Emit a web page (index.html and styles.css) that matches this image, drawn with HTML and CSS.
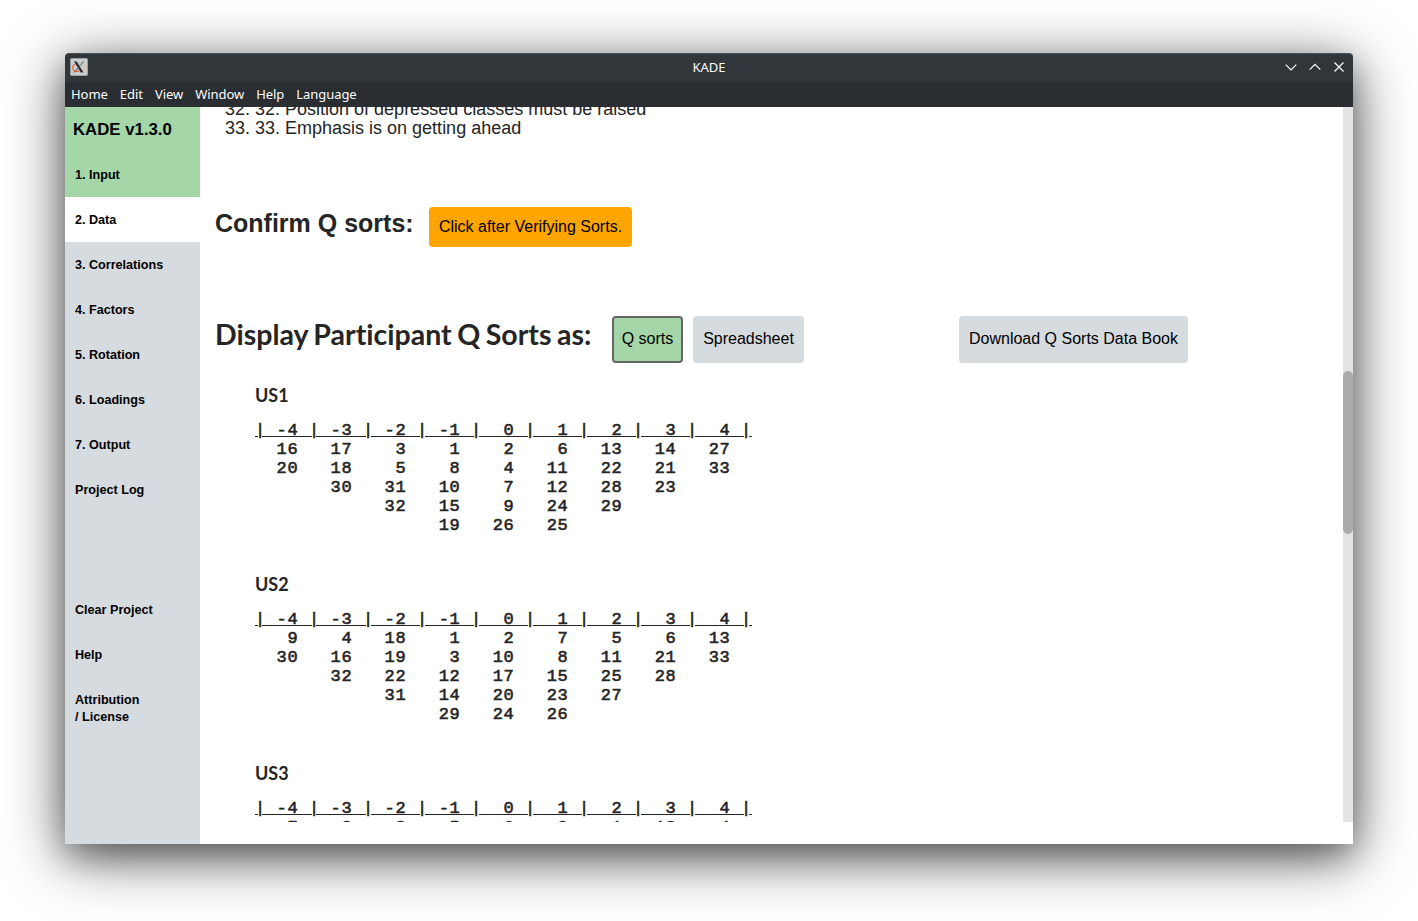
FILE: index.html
```html
<!DOCTYPE html>
<html lang="en">
<head>
<meta charset="utf-8">
<title>KADE</title>
<link rel="stylesheet" href="styles.css">
</head>
<body>
<div class="window">
  <header class="titlebar">
    <svg class="app-icon" width="18" height="18" viewBox="0 0 18 18"><rect x=".5" y=".5" width="17" height="17" rx="1" fill="#c9cdd0" stroke="#9ca1a4"/><path d="M5.500 6C3 7 2 9 3 11c.8 2 3 2.800 6 2.300" fill="none" stroke="#ee6b3b" stroke-width="1.300"/><path d="M11.500 5c3 .5 4.500 3 3.500 5.500-.7 2-2.500 3-4.500 3" fill="none" stroke="#e5bd86" stroke-width="1"/><path d="M4 3.500h2.800l6.700 11h-2.800z" fill="#2b3035"/><path d="M13.500 3.500L4.300 14.500" stroke="#4b5055" stroke-width=".9"/></svg>
    <h1 class="title">KADE</h1>
    <div class="controls">
      <svg width="12" height="12" viewBox="0 0 12 12"><path d="M.7 3.700L6 9l5.300-5.300"/></svg>
      <svg width="12" height="12" viewBox="0 0 12 12"><path d="M.7 8.700L6 3.400l5.300 5.300"/></svg>
      <svg width="12" height="12" viewBox="0 0 12 12"><path d="M1.500 1.500l9 9m0-9l-9 9"/></svg>
    </div>
  </header>
  <nav class="menubar"><span>Home</span><span>Edit</span><span>View</span><span>Window</span><span>Help</span><span>Language</span></nav>
  <div class="body">
    <aside class="sidebar">
      <div class="brand">KADE v1.3.0</div>
      <a class="item done">1. Input</a>
      <a class="item active">2. Data</a>
      <a class="item">3. Correlations</a>
      <a class="item">4. Factors</a>
      <a class="item">5. Rotation</a>
      <a class="item">6. Loadings</a>
      <a class="item">7. Output</a>
      <a class="item">Project Log</a>
      <a class="item gap">Clear Project</a>
      <a class="item">Help</a>
      <a class="item two">Attribution<br>/ License</a>
    </aside>
    <main class="content">
      <div class="statements"><div>32. 32. Position of depressed classes must be raised</div><div>33. 33. Emphasis is on getting ahead</div></div>
      <div class="confirm"><h2>Confirm Q sorts:</h2><button class="btn orange">Click after Verifying Sorts.</button></div>
      <div class="display"><h2>Display Participant Q Sorts as:</h2><button class="btn selected">Q sorts</button><button class="btn sheet">Spreadsheet</button><button class="btn download">Download Q Sorts Data Book</button></div>
      <section class="sort"><h3>US1</h3>
<pre><u>| -4 | -3 | -2 | -1 |  0 |  1 |  2 |  3 |  4 |</u>
  16   17    3    1    2    6   13   14   27
  20   18    5    8    4   11   22   21   33
       30   31   10    7   12   28   23
            32   15    9   24   29
                 19   26   25</pre></section>
      <section class="sort"><h3>US2</h3>
<pre><u>| -4 | -3 | -2 | -1 |  0 |  1 |  2 |  3 |  4 |</u>
   9    4   18    1    2    7    5    6   13
  30   16   19    3   10    8   11   21   33
       32   22   12   17   15   25   28
            31   14   20   23   27
                 29   24   26</pre></section>
      <section class="sort"><h3>US3</h3>
<pre><u>| -4 | -3 | -2 | -1 |  0 |  1 |  2 |  3 |  4 |</u>
   7    3    8    5    6    9    1   12    4</pre></section>
    </main>
    <div class="scrollbar"><div class="thumb"></div></div>
  </div>
</div>
</body>
</html>
```
FILE: styles.css
```css
* { box-sizing: border-box; }
body { margin: 0; padding: 53px 65px 77px; height: 921px; overflow: hidden; background: #fff; font-family: "Liberation Sans", Arial, sans-serif; color: #252525; }
.window { width: 1288px; height: 791px; border-radius: 4px 4px 0 0; background: #fff; display: flex; flex-direction: column; box-shadow: 0 12px 60px rgba(0,0,0,.65), 0 12px 28px rgba(0,0,0,.25); }
.titlebar { height: 29px; flex: none; display: grid; grid-template-columns: 100px 1fr 100px; align-items: center; padding-bottom: 2px; background: #31363b; border-top: 1px solid #4b5359; border-radius: 4px 4px 0 0; color: #fcfcfc; }
.app-icon { margin-left: 5px; }
.title { margin: 0; text-align: center; font: 13px/20px "Noto Sans", sans-serif; }
.controls { display: flex; gap: 12px; justify-content: flex-end; padding-right: 8px; }
.controls path { fill: none; stroke: #fcfcfc; stroke-width: 1.2; }
.menubar { height: 25px; flex: none; display: flex; gap: 12px; padding-left: 6px; background: #2a2e32; color: #fcfcfc; font: 13px/25px "Noto Sans", sans-serif; letter-spacing: -.05px; }
.body { flex: 1; min-height: 0; display: flex; }
.sidebar { width: 135px; flex: none; background: #d6dbdf; color: #000; font-weight: 700; }
.brand { height: 45px; padding-left: 8px; background: #a5d6a7; font-size: 16.8px; line-height: 45px; }
.item { display: block; height: 45px; padding: 1px 0 0 10px; font-size: 12.6px; line-height: 45px; }
.done { background: #a5d6a7; }
.active { background: #fff; }
.gap { margin-top: 75px; }
.two { line-height: 17px; padding-top: 15px; }
.content { flex: 1; height: 715px; overflow: hidden; padding-left: 15px; }
.statements { height: 100px; padding-left: 10px; font-size: 18px; line-height: 19px; margin-top: -7px; }
.confirm { display: flex; height: 40px; margin-top: 7px; }
.confirm h2 { margin: 0; width: 214px; font-size: 25px; line-height: 33px; white-space: nowrap; }
.btn { padding: 0; border: 0; border-radius: 4px; background: #d6dbdf; color: #000; font: 16px "Liberation Sans", Arial, sans-serif; white-space: nowrap; }
.orange { width: 203px; background: #ffa500; }
.display { display: flex; height: 47px; margin-top: 69px; }
.display h2 { margin: 0; width: 397px; font: 700 28.5px/36px Lato, sans-serif; font-variant-ligatures: none; word-spacing: -1.4px; white-space: nowrap; }
.display .btn { padding-bottom: 2px; }
.display .selected { width: 71px; border: 2px solid #666; background: #a5d6a7; }
.sheet { width: 111px; margin-left: 10px; }
.download { width: 229px; margin-left: 155px; }
.sort { height: 189px; padding: 20px 0 0 40px; }
.sort h3 { margin: 0; font: 700 18px/24px Lato, sans-serif; }
.sort pre { margin: 14px 0 0; font: 400 17px/19px "Liberation Mono", monospace; letter-spacing: .6px; -webkit-text-stroke: .6px #252525; }
.scrollbar { width: 10px; height: 715px; background: #e4e4e4; padding-top: 264px; }
.thumb { height: 163px; border-radius: 5px; background: #aaa; }
```
